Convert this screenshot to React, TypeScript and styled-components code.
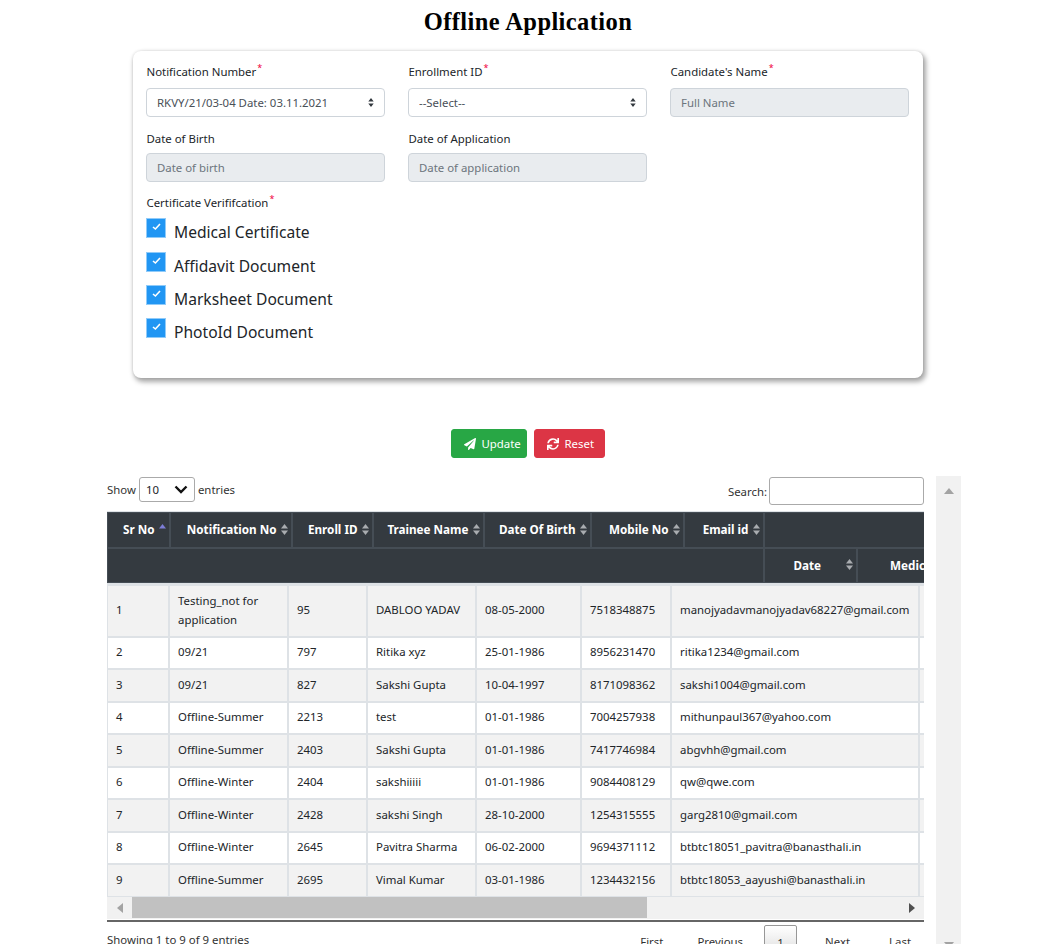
import React from 'react';
import styled, { createGlobalStyle } from 'styled-components';
import { FaPaperPlane, FaSync } from 'react-icons/fa';

const GlobalStyle = createGlobalStyle`
  html, body {
    margin: 0;
    height: 944px;
    overflow: hidden;
    background: #fff;
  }
  body {
    font-family: "Noto Sans", "Open Sans", Arial, sans-serif;
    font-size: 11.4px;
    color: #212529;
  }
  * { box-sizing: border-box; }
`;

const Top = styled.div`
  width: 790px;
  margin-left: 133px;
`;

const Title = styled.h1`
  margin: 0;
  height: 51px;
  padding-top: 8px;
  text-align: center;
  font-family: "Liberation Serif", "Times New Roman", serif;
  font-size: 24.5px;
  letter-spacing: 0.4px;
  line-height: 28px;
  font-weight: 700;
  color: #000;
`;

const Card = styled.form`
  height: 327px;
  padding: 12px 14px 0 13px;
  background: #fff;
  border-radius: 8px;
  box-shadow: 2px 3px 5px 1px rgba(0, 0, 0, 0.34), 0 0 3px rgba(0, 0, 0, 0.1);
`;

const FieldGrid = styled.div`
  display: grid;
  grid-template-columns: repeat(3, 239px);
  column-gap: 23px;
  row-gap: 13px;
`;

const Field = styled.div`
  display: flex;
  flex-direction: column;
`;

const Label = styled.label<{ $short?: boolean }>`
  height: ${props => (props.$short ? '23px' : '25px')};
  line-height: 18px;
  padding-left: 0.5px;
  color: #212529;
  white-space: nowrap;
`;

const Star = styled.sup`
  color: #f0003c;
  font-size: 9px;
  line-height: 0;
  margin-left: 1px;
`;

const Select = styled.select`
  height: 29px;
  padding: 0 24px 0 10px;
  appearance: none;
  font: inherit;
  color: #495057;
  background: #fff url("data:image/svg+xml,%3csvg xmlns='http://www.w3.org/2000/svg' width='6' height='9' viewBox='0 0 6 9'%3e%3cpath fill='%23343a40' d='M3 0 0.3 3.4h5.4zM3 9 0.3 5.6h5.4z'/%3e%3c/svg%3e") no-repeat right 10px center;
  border: 1px solid #ced4da;
  border-radius: 4px;
`;

const Input = styled.input`
  height: 29px;
  padding: 0 10px;
  font: inherit;
  background: #e9ecef;
  border: 1px solid #ced4da;
  border-radius: 4px;

  &::placeholder { color: #6c757d; opacity: 1; }
`;

const CertLabel = styled(Label)`
  display: block;
  margin-top: 12px;
  height: 24.4px;
`;

const CheckList = styled.div`
  display: flex;
  flex-direction: column;
`;

const CheckRow = styled.div`
  display: flex;
  align-items: flex-start;
  gap: 8px;
  height: 33.3px;
`;

const CheckBox = styled.span`
  flex: none;
  width: 20px;
  height: 20px;
  display: flex;
  justify-content: center;
  padding-top: 4px;
  background: #2196f3;
  border: 1px solid #90cbf9;
`;

const CheckText = styled.span`
  font-size: 15.6px;
  line-height: 28px;
  color: #212529;
`;

const Actions = styled.div`
  display: flex;
  justify-content: center;
  gap: 7px;
  margin-top: 51px;
  height: 47px;
`;

const ActionButton = styled.button<{ $tone: string }>`
  display: flex;
  align-items: center;
  gap: 6px;
  width: ${props => (props.$tone === 'green' ? '76px' : '71px')};
  height: 29px;
  padding: 0 0 0 11.5px;
  font: inherit;
  color: #fff;
  background: ${props => (props.$tone === 'green' ? '#28a745' : '#dc3545')};
  border: 1px solid ${props => (props.$tone === 'green' ? '#28a745' : '#dc3545')};
  border-radius: 3px;
`;

const Lower = styled.div`
  display: flex;
  gap: 12px;
  padding-left: 107px;
`;

const TableColumn = styled.div`
  width: 817px;
  flex: none;
`;

const ControlBar = styled.div`
  display: flex;
  justify-content: space-between;
  align-items: center;
  height: 28px;
  margin-top: 1px;
`;

const LengthControl = styled.div`
  display: flex;
  align-items: center;
  gap: 3px;
  color: #333;
  padding-bottom: 3px;
`;

const LengthSelect = styled.div`
  width: 56px;
  height: 25px;
  padding: 0 6px;
  display: flex;
  align-items: center;
  justify-content: space-between;
  color: #212529;
  border: 1px solid #aaa;
  border-radius: 3px;
`;

const SearchControl = styled.label`
  display: flex;
  align-items: center;
  gap: 2px;
  color: #333;
`;

const SearchInput = styled.input`
  width: 155px;
  height: 28px;
  background: #fff;
  border: 1px solid #aaa;
  border-radius: 3px;
`;

const HeadClip = styled.div`
  width: 817px;
  overflow: hidden;
  margin-top: 6px;
  border-top: 1px solid #dee2e6;
`;

const DataTable = styled.table`
  border-collapse: separate;
  border-spacing: 0;
  table-layout: fixed;
  width: 1400px;
`;

const HeadCell = styled.th`
  height: 35.5px;
  padding: 0 3.5px 1px 8px;
  font-size: 11.7px;
  font-weight: 700;
  color: #fff;
  background: #343a40;
  border: 1px solid #454d55;
  white-space: nowrap;
  text-align: left;
  overflow: hidden;
`;

const HeadInner = styled.span`
  display: flex;
  align-items: center;
  justify-content: flex-end;
  gap: 4px;
`;

const WideHeadText = styled.span<{ $indent?: number }>`
  flex: 1;
  text-align: ${props => (props.$indent ? 'left' : 'center')};
  padding-left: ${props => props.$indent || 0}px;
`;

const HeadRule = styled.div`
  height: 2px;
  background: #dee2e6;
  width: 817px;
`;

const BodyClip = styled.div`
  width: 817px;
  overflow: hidden;
`;

const BodyCell = styled.td<{ $odd: boolean }>`
  padding: 4.75px 8px 6.75px;
  line-height: 19px;
  color: #212529;
  background: ${props => (props.$odd ? '#f2f2f2' : '#fff')};
  border: 1px solid #dee2e6;
  vertical-align: middle;
`;

const HScroll = styled.div`
  display: flex;
  align-items: center;
  height: 22px;
  background: #f1f1f1;
`;

const HButton = styled.div`
  flex: none;
  width: 25px;
  height: 100%;
  display: flex;
  align-items: center;
  justify-content: center;
`;

const HThumb = styled.div`
  width: 515px;
  height: 21px;
  background: #c1c1c1;
`;

const HTrack = styled.div`
  flex: 1;
`;

const TableFoot = styled.div`
  display: flex;
  justify-content: space-between;
  border-top: 2px solid #666;
  margin-top: 1px;
`;

const InfoText = styled.div`
  padding-top: 10px;
  color: #333;
`;

const Pager = styled.div`
  display: flex;
  align-items: flex-start;
  padding-top: 3px;
`;

const PageLink = styled.span<{ $l?: number; $r?: number }>`
  height: 32px;
  padding: 8px ${props => props.$r ?? 13}px 0 ${props => props.$l ?? 28}px;
  color: #333;
  line-height: 18px;
`;

const CurrentPage = styled.span`
  width: 33px;
  height: 32px;
  margin-left: 4px;
  padding-top: 8px;
  text-align: center;
  color: #333;
  line-height: 18px;
  border: 1px solid #979797;
  border-radius: 2px;
  background: linear-gradient(#fff, #dcdcdc);
`;

const VScroll = styled.div`
  flex: none;
  width: 25px;
  height: 474px;
  display: flex;
  flex-direction: column;
  justify-content: space-between;
  align-items: center;
  padding: 10px 0 0;
  background: #f1f1f1;
`;

const Arrow: React.FC<{ dir: 'up' | 'down' | 'left' | 'right'; color: string }> = ({ dir, color }) => {
  const points = {
    up: '0,8 5,2 10,8',
    down: '0,2 5,8 10,2',
    left: '8,0 2,5 8,10',
    right: '2,0 8,5 2,10',
  }[dir];
  return (
    <svg width="10" height="10" viewBox="0 0 10 10">
      <polygon points={points} fill={color} />
    </svg>
  );
};

const SortIcon: React.FC<{ active?: boolean }> = ({ active }) => (
  <svg width="7" height="13" viewBox="0 0 7 13" style={{ flex: 'none' }}>
    <polygon points="0,5.5 3.5,1 7,5.5" fill={active ? '#7d7dd6' : '#a9acb0'} />
    {!active && <polygon points="0,7.5 3.5,12 7,7.5" fill="#a9acb0" />}
  </svg>
);

const Check = () => (
  <svg width="9" height="8" viewBox="0 0 9 8">
    <path d="M1 4 L3.4 6 L8 1" fill="none" stroke="#fff" strokeWidth="1.6" />
  </svg>
);

const headWidths = [63, 122, 81, 111, 107, 93, 80, 93, 300, 350];
const bodyWidths = [62, 119, 79, 109, 105, 90, 248, 90, 300, 300];

const sortHeads = ['Sr No', 'Notification No', 'Enroll ID', 'Trainee Name', 'Date Of Birth', 'Mobile No', 'Email id'];

const rows = [
  ['1', 'Testing_not for application', '95', 'DABLOO YADAV', '08-05-2000', '7518348875', 'manojyadavmanojyadav68227@gmail.com'],
  ['2', '09/21', '797', 'Ritika xyz', '25-01-1986', '8956231470', 'ritika1234@gmail.com'],
  ['3', '09/21', '827', 'Sakshi Gupta', '10-04-1997', '8171098362', 'sakshi1004@gmail.com'],
  ['4', 'Offline-Summer', '2213', 'test', '01-01-1986', '7004257938', 'mithunpaul367@yahoo.com'],
  ['5', 'Offline-Summer', '2403', 'Sakshi Gupta', '01-01-1986', '7417746984', 'abgvhh@gmail.com'],
  ['6', 'Offline-Winter', '2404', 'sakshiiiii', '01-01-1986', '9084408129', 'qw@qwe.com'],
  ['7', 'Offline-Winter', '2428', 'sakshi Singh', '28-10-2000', '1254315555', 'garg2810@gmail.com'],
  ['8', 'Offline-Winter', '2645', 'Pavitra Sharma', '06-02-2000', '9694371112', 'btbtc18051_pavitra@banasthali.in'],
  ['9', 'Offline-Summer', '2695', 'Vimal Kumar', '03-01-1986', '1234432156', 'btbtc18053_aayushi@banasthali.in'],
];

const certificates = ['Medical Certificate', 'Affidavit Document', 'Marksheet Document', 'PhotoId Document'];

const App: React.FC = () => {
  return (
    <>
      <GlobalStyle />
      <Top>
        <Title>Offline Application</Title>
        <Card>
          <FieldGrid>
            <Field>
              <Label>Notification Number<Star>*</Star></Label>
              <Select defaultValue="a">
                <option value="a">RKVY/21/03-04 Date: 03.11.2021</option>
              </Select>
            </Field>
            <Field>
              <Label>Enrollment ID<Star>*</Star></Label>
              <Select defaultValue="a">
                <option value="a">--Select--</option>
              </Select>
            </Field>
            <Field>
              <Label>Candidate's Name<Star>*</Star></Label>
              <Input disabled placeholder="Full Name" />
            </Field>
            <Field>
              <Label $short>Date of Birth</Label>
              <Input disabled placeholder="Date of birth" />
            </Field>
            <Field>
              <Label $short>Date of Application</Label>
              <Input disabled placeholder="Date of application" />
            </Field>
          </FieldGrid>
          <CertLabel>Certificate Verififcation<Star>*</Star></CertLabel>
          <CheckList>
            {certificates.map(name => (
              <CheckRow key={name}>
                <CheckBox><Check /></CheckBox>
                <CheckText>{name}</CheckText>
              </CheckRow>
            ))}
          </CheckList>
        </Card>
        <Actions>
          <ActionButton type="button" $tone="green"><FaPaperPlane size={12} />Update</ActionButton>
          <ActionButton type="button" $tone="red"><FaSync size={12} />Reset</ActionButton>
        </Actions>
      </Top>
      <Lower>
        <TableColumn>
          <ControlBar>
            <LengthControl>
              Show
              <LengthSelect>
                10
                <svg width="14" height="9" viewBox="0 0 14 9">
                  <path d="M1.5 1.5 L7 7 L12.5 1.5" fill="none" stroke="#111" strokeWidth="2.4" />
                </svg>
              </LengthSelect>
              entries
            </LengthControl>
            <SearchControl>
              Search:
              <SearchInput />
            </SearchControl>
          </ControlBar>
          <HeadClip>
            <DataTable>
              <colgroup>
                {headWidths.map((w, i) => <col key={i} width={w} />)}
              </colgroup>
              <thead>
                <tr>
                  {sortHeads.map((h, i) => (
                    <HeadCell key={h}>
                      <HeadInner>
                        <span>{h}</span>
                        <SortIcon active={i === 0} />
                      </HeadInner>
                    </HeadCell>
                  ))}
                  <HeadCell colSpan={3} />
                </tr>
                <tr>
                  <HeadCell colSpan={7} />
                  <HeadCell>
                    <HeadInner>
                      <WideHeadText>Date</WideHeadText>
                      <SortIcon />
                    </HeadInner>
                  </HeadCell>
                  <HeadCell>
                    <HeadInner>
                      <WideHeadText $indent={24}>Medical Certificate</WideHeadText>
                      <SortIcon />
                    </HeadInner>
                  </HeadCell>
                  <HeadCell />
                </tr>
              </thead>
            </DataTable>
          </HeadClip>
          <HeadRule />
          <BodyClip>
            <DataTable>
              <colgroup>
                {bodyWidths.map((w, i) => <col key={i} width={w} />)}
              </colgroup>
              <tbody>
                {rows.map((row, r) => (
                  <tr key={row[0]}>
                    {row.map((cell, c) => (
                      <BodyCell key={c} $odd={r % 2 === 0}>{cell}</BodyCell>
                    ))}
                    <BodyCell $odd={r % 2 === 0} />
                    <BodyCell $odd={r % 2 === 0} />
                    <BodyCell $odd={r % 2 === 0} />
                  </tr>
                ))}
              </tbody>
            </DataTable>
          </BodyClip>
          <HScroll>
            <HButton><Arrow dir="left" color="#a3a3a3" /></HButton>
            <HThumb />
            <HTrack />
            <HButton><Arrow dir="right" color="#505050" /></HButton>
          </HScroll>
          <TableFoot>
            <InfoText>Showing 1 to 9 of 9 entries</InfoText>
            <Pager>
              <PageLink $l={17} $r={17}>First</PageLink>
              <PageLink $l={17} $r={17}>Previous</PageLink>
              <CurrentPage>1</CurrentPage>
              <PageLink $r={12}>Next</PageLink>
              <PageLink $l={27}>Last</PageLink>
            </Pager>
          </TableFoot>
        </TableColumn>
        <VScroll>
          <Arrow dir="up" color="#a3a3a3" />
          <Arrow dir="down" color="#a3a3a3" />
        </VScroll>
      </Lower>
    </>
  );
};

export default App;
